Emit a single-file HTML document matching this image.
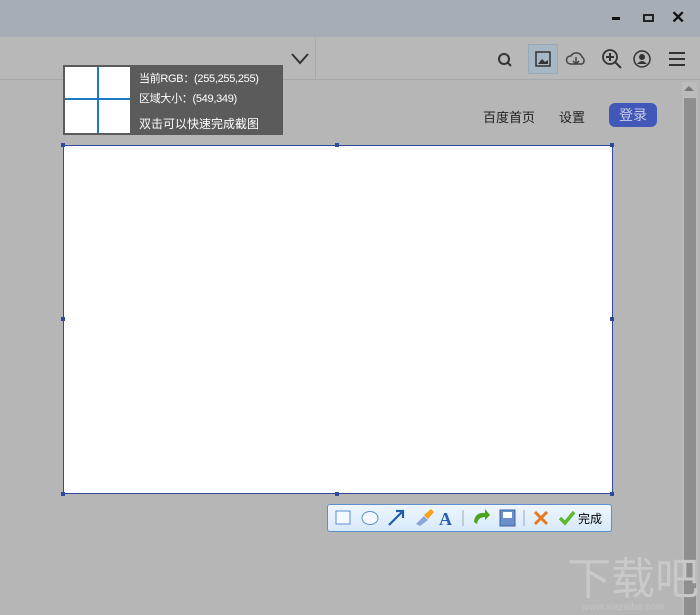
<!DOCTYPE html>
<html><head><meta charset="utf-8"><style>
*{margin:0;padding:0;box-sizing:border-box}
html,body{width:700px;height:615px;overflow:hidden}
body{background:#b6b6b6;font-family:"Liberation Sans","Noto Sans CJK SC",sans-serif;position:relative}
.abs{position:absolute;white-space:nowrap}
</style></head><body>
<div class="abs" style="left:0;top:0;width:700px;height:37px;background:#a6adb5"></div>
<div class="abs" style="left:612px;top:17px;width:8px;height:3px;background:#111"></div>
<div class="abs" style="left:643px;top:14px;width:11px;height:8px;border:2px solid #222"></div>
<div class="abs" style="left:671px;top:8px;font-size:17px;font-weight:bold;color:#111">✕</div>
<div class="abs" style="left:0;top:37px;width:700px;height:43px;background:#b8b8b8;border-bottom:1px solid #a8a8a8"></div>
<div class="abs" style="left:315px;top:37px;width:1px;height:43px;background:#a9a9a9"></div>
<svg class="abs" style="left:290px;top:52px" width="20" height="14"><path d="M2 2 L10 11 L18 2" stroke="#333" stroke-width="2" fill="none"/></svg>
<svg class="abs" style="left:495px;top:50px" width="20" height="20"><circle cx="9" cy="9" r="5" stroke="#333" stroke-width="2" fill="none"/><path d="M12 12 L16 16" stroke="#333" stroke-width="2"/></svg>
<div class="abs" style="left:528px;top:44px;width:30px;height:30px;background:#a7b7c4;border:1px solid #95a9ba"></div>
<svg class="abs" style="left:533px;top:49px" width="20" height="20"><rect x="3" y="3" width="14" height="14" stroke="#333" fill="none" stroke-width="1.5"/><path d="M5 15 L9 10 L12 13 L15 11 L15 15Z" fill="#333"/></svg>
<svg class="abs" style="left:565px;top:49px" width="22" height="20"><path d="M5 15 A4 4 0 0 1 6 7 A6 6 0 0 1 17 8 A4 4 0 0 1 17 15Z" stroke="#444" fill="none" stroke-width="1.5"/><path d="M11 8 V15 M8 12 L11 15 L14 12" stroke="#444" fill="none" stroke-width="1.5"/></svg>
<svg class="abs" style="left:601px;top:48px" width="22" height="22"><circle cx="9" cy="9" r="7" stroke="#333" stroke-width="1.8" fill="none"/><path d="M9 5 V13 M5 9 H13 M14 14 L20 20" stroke="#333" stroke-width="2"/></svg>
<svg class="abs" style="left:632px;top:49px" width="20" height="20"><circle cx="10" cy="10" r="8" stroke="#333" stroke-width="1.5" fill="none"/><circle cx="10" cy="8" r="3" fill="#333"/><path d="M5 15 Q10 9 15 15Z" fill="#333"/></svg>
<svg class="abs" style="left:668px;top:50px" width="18" height="18"><path d="M1 3 H17 M1 9 H17 M1 15 H17" stroke="#333" stroke-width="2"/></svg>
<div class="abs" style="left:682px;top:82px;width:15px;height:533px;background:#bcbcbc"></div>
<div class="abs" style="left:684px;top:98px;width:12px;height:517px;background:#8e8e8e"></div>
<div class="abs" style="left:684px;top:86px;width:0;height:0;border-left:5px solid transparent;border-right:5px solid transparent;border-bottom:5px solid #777"></div>
<div class="abs" style="left:483px;top:107px;font-size:13px;color:#222">百度首页</div>
<div class="abs" style="left:559px;top:107px;font-size:13px;color:#222">设置</div>
<div class="abs" style="left:609px;top:103px;width:48px;height:24px;background:#4258b8;border-radius:6px;color:#c8cde8;font-size:14px;text-align:center;line-height:24px">登录</div>
<div class="abs" style="left:63px;top:65px;width:220px;height:70px;background:#5b5b5b"></div>
<div class="abs" style="left:65px;top:67px;width:65px;height:66px;background:#fff"></div>
<div class="abs" style="left:97px;top:67px;width:2px;height:66px;background:#1a7bc0"></div>
<div class="abs" style="left:65px;top:98px;width:65px;height:2px;background:#1a7bc0"></div>
<div class="abs" style="left:139px;top:69px;font-size:11px;color:#fff;line-height:20px;letter-spacing:-0.3px">当前RGB：(255,255,255)<br>区域大小：(549,349)</div>
<div class="abs" style="left:139px;top:115px;font-size:12px;color:#fff">双击可以快速完成截图</div>
<div class="abs" style="left:63px;top:145px;width:550px;height:349px;background:#fff;border:1px solid #2d4b9a"></div>
<div class="abs" style="left:61px;top:143px;width:4px;height:4px;background:#2d4b9a"></div>
<div class="abs" style="left:335px;top:143px;width:4px;height:4px;background:#2d4b9a"></div>
<div class="abs" style="left:610px;top:143px;width:4px;height:4px;background:#2d4b9a"></div>
<div class="abs" style="left:61px;top:317px;width:4px;height:4px;background:#2d4b9a"></div>
<div class="abs" style="left:610px;top:317px;width:4px;height:4px;background:#2d4b9a"></div>
<div class="abs" style="left:61px;top:492px;width:4px;height:4px;background:#2d4b9a"></div>
<div class="abs" style="left:335px;top:492px;width:4px;height:4px;background:#2d4b9a"></div>
<div class="abs" style="left:610px;top:492px;width:4px;height:4px;background:#2d4b9a"></div>
<div class="abs" style="left:327px;top:504px;width:285px;height:28px;background:linear-gradient(#eef6ff,#d8e9fb);border:1px solid #5b8fcf;border-radius:3px"></div>
<svg class="abs" style="left:327px;top:504px" width="285" height="28">
<rect x="9" y="7" width="14" height="13" fill="#f4f8ff" stroke="#5b8fcf"/>
<ellipse cx="43" cy="14" rx="8" ry="6.5" fill="#f4f8ff" stroke="#5b8fcf"/>
<path d="M62 21 L76 7 M69 7 H76 V14" stroke="#1e5fa8" stroke-width="2.2" fill="none"/>
<path d="M89 20 L97 12 L101 16 L93 22Z" fill="#8aa7d8"/><path d="M97 11 L104 5 L107 8 L101 15Z" fill="#f2a31a"/>
<text x="112" y="21" font-family="Liberation Serif" font-size="18" font-weight="bold" fill="#2a5fb0">A</text>
<line x1="136" y1="6" x2="136" y2="22" stroke="#9ab"/>
<path d="M147 18 Q148 8 158 9 L158 5 L163 11 L158 16 L158 13 Q151 13 150 20Z" fill="#4aa41e"/>
<rect x="173" y="6" width="15" height="16" fill="#6b8fc8" stroke="#3b63a0"/><rect x="176" y="8" width="9" height="6" fill="#fff"/>
<line x1="197" y1="6" x2="197" y2="22" stroke="#9ab"/>
<path d="M208 8 L220 20 M220 8 L208 20" stroke="#e5781a" stroke-width="3"/>
<path d="M233 14 L238 19 L247 8" stroke="#5bb82a" stroke-width="3.5" fill="none"/>
<text x="251" y="19" font-size="12" fill="#000" font-family="Liberation Sans,Noto Sans CJK SC,sans-serif">完成</text>
</svg>
<div class="abs" style="left:567px;top:556px;font-size:44px;color:#c9c9c9;line-height:48px">下载吧</div>
<div class="abs" style="left:582px;top:602px;font-size:10px;color:#c4c4c4">www.xiazaiba.com</div>
</body></html>
